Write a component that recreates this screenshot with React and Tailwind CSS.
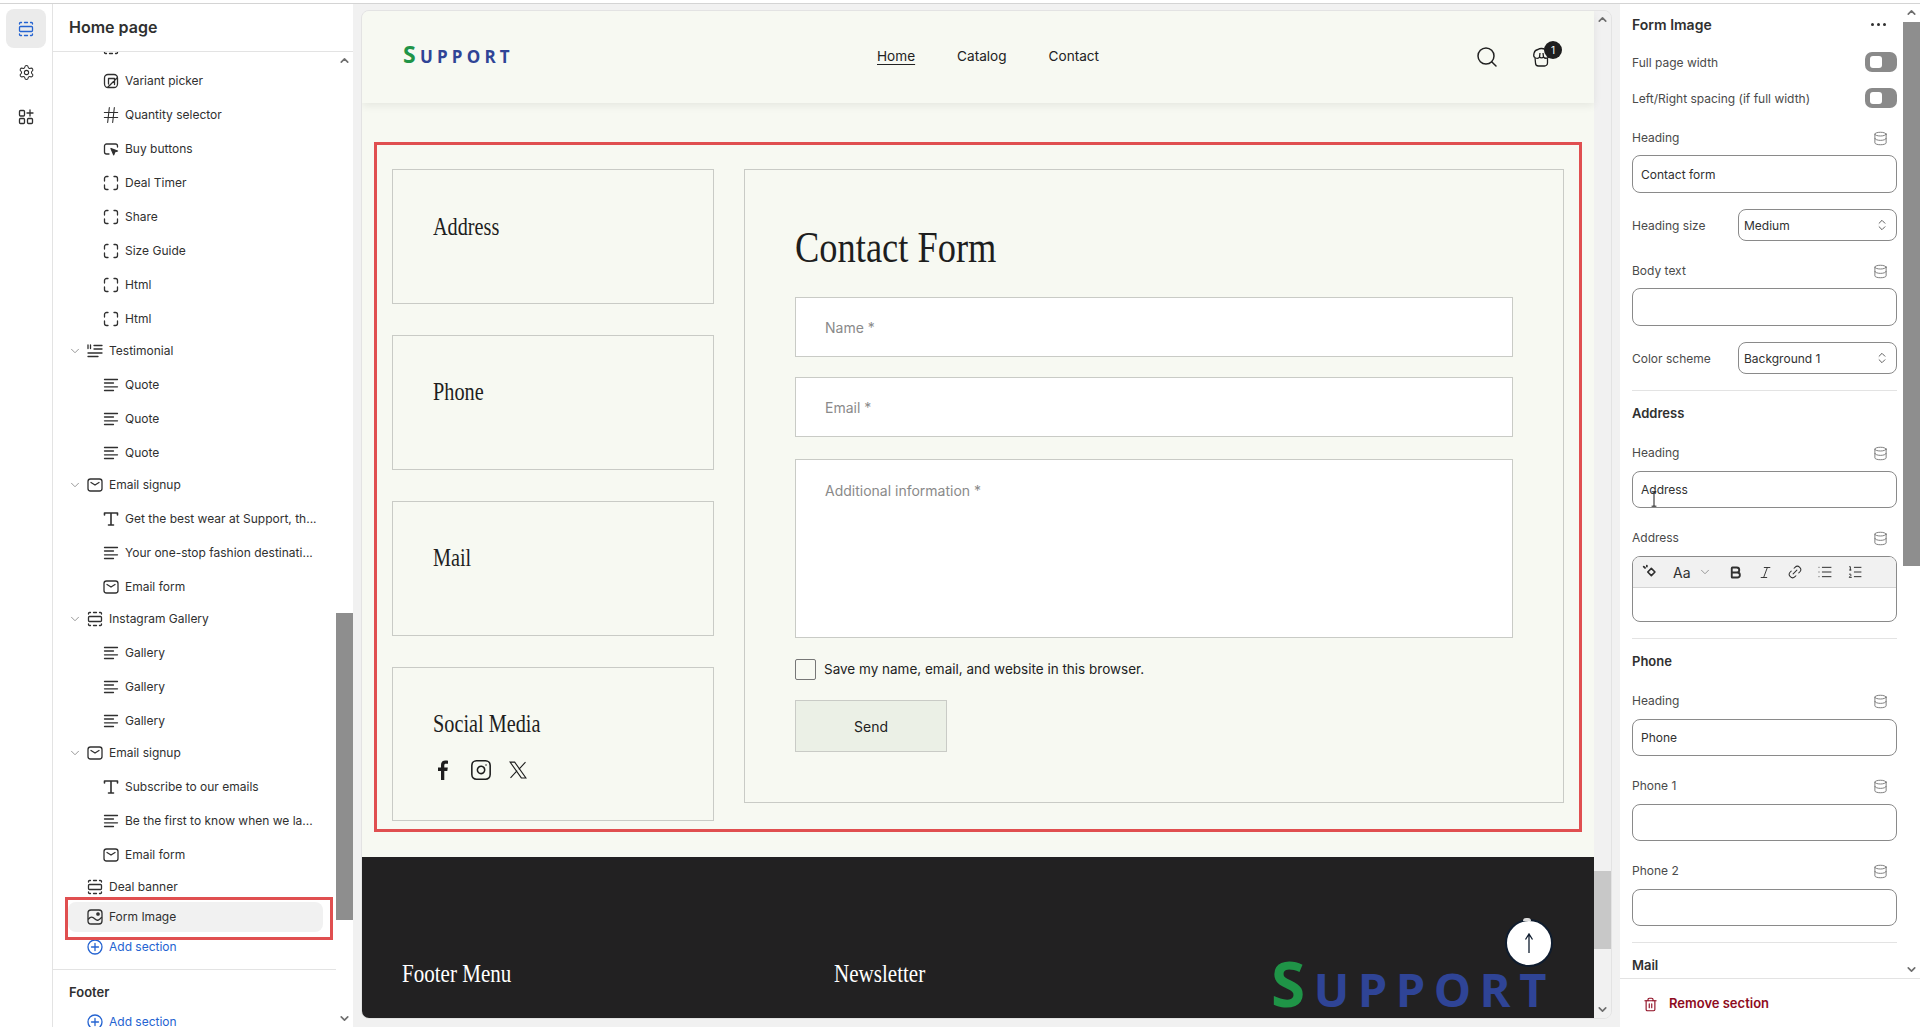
import React from "react";
import { ChevronUp, ChevronDown, ChevronsUpDown, Hash, Settings, Search, Trash2, Bold, Italic, Link2, List, ListOrdered, Database, Instagram } from "lucide-react";

const S = ({ children, className = "w-5 h-5" }) => (
  <svg viewBox="0 0 20 20" fill="none" stroke="currentColor" strokeWidth="1.300" strokeLinecap="round" strokeLinejoin="round" className={className}>{children}</svg>
);
const Block = () => <S><path d="M7 3.500H5.500a2 2 0 0 0-2 2V8M13 3.500h1.500a2 2 0 0 1 2 2V8M7 16.500H5.500a2 2 0 0 1-2-2V12M13 16.500h1.500a2 2 0 0 0 2-2V12" /></S>;
const Lines = () => <S><path d="M3.500 4.500h13M3.500 8h9M3.500 11.800h13M3.500 15.500h9" /></S>;
const TextT = () => <S><path d="M3.500 6V4h13v2M10 4v12M7.500 16h5" strokeWidth="1.600" /></S>;
const Mail = () => <S><rect x="3" y="4" width="14" height="12" rx="2.500" /><path d="M6 7.500l4 2.500 4-2.500" /></S>;
const Sec = () => <S><rect x="3.500" y="7.500" width="13" height="5" rx="1" /><path d="M3.500 5V4.500a1 1 0 0 1 1-1h1M8.500 3.500h3M14.500 3.500h1a1 1 0 0 1 1 1V5M3.500 15v.5a1 1 0 0 0 1 1h1M8.500 16.500h3M14.500 16.500h1a1 1 0 0 0 1-1V15" /></S>;
const Variant = () => <S><rect x="3.500" y="3.500" width="13" height="13" rx="3.500" /><path d="M7 16l9-9M7.500 7.500h6v6M7.500 7.500V13" /></S>;
const Buy = () => <S><path d="M8 15H5.500a2 2 0 0 1-2-2V7a2 2 0 0 1 2-2h9a2 2 0 0 1 2 2v1" /><path d="M10 9.500l6.500 2.500-2.800 1-1 2.800z" fill="currentColor" /></S>;
const Testi = () => <S><path d="M3 4v3.500M5.500 4v3.500M9 4.500h8M9 8h8M3 12h14M3 15.500h10" /></S>;
const FormImg = () => <S><rect x="3" y="3" width="14" height="14" rx="3" /><path d="M3.500 12c2-2.500 4-2.500 6.500 0s4 1 6.500-1.500" /><circle cx="13" cy="7" r="1.200" fill="currentColor" /></S>;
const PlusC = () => <S><circle cx="10" cy="10" r="7" /><path d="M10 6.500v7M6.500 10h7" /></S>;
const HashI = () => <Hash className="w-5 h-5" strokeWidth={1.300} />;

const kids = (arr) => arr.map(([label, Icon]) => ({ label, Icon, child: true }));
const rows = [
  ...kids([["", Sec], ["Variant picker", Variant], ["Quantity selector", HashI], ["Buy buttons", Buy], ["Deal Timer", Block], ["Share", Block], ["Size Guide", Block], ["Html", Block], ["Html", Block]]),
  { label: "Testimonial", Icon: Testi },
  ...kids([["Quote", Lines], ["Quote", Lines], ["Quote", Lines]]),
  { label: "Email signup", Icon: Mail },
  ...kids([["Get the best wear at Support, th...", TextT], ["Your one-stop fashion destinati...", Lines], ["Email form", Mail]]),
  { label: "Instagram Gallery", Icon: Sec },
  ...kids([["Gallery", Lines], ["Gallery", Lines], ["Gallery", Lines]]),
  { label: "Email signup", Icon: Mail },
  ...kids([["Subscribe to our emails", TextT], ["Be the first to know when we la...", Lines], ["Email form", Mail]]),
];

const Row = (r) => (
  r.child ? (
    <div className="h-[34px] flex items-center pl-[48px] gap-[4px] text-[#303030]">
      <span className="w-5 h-5 shrink-0"><r.Icon /></span>
      <span className="whitespace-nowrap">{r.label}</span>
    </div>
  ) : (
    <div className="h-[30px] mb-[2px] flex items-center text-[#303030]">
      <ChevronDown className="w-[14px] h-[14px] ml-[15px] mr-[3px] text-[#8a8a8a]" strokeWidth={1.500} />
      <span className="w-5 h-5 shrink-0"><r.Icon /></span>
      <span className="ml-[4px] whitespace-nowrap">{r.label}</span>
    </div>
  )
);
const AddSection = () => (
  <div className="h-[30px] flex items-center pl-[32px] gap-[4px] text-[#2463d1]"><PlusC /><span>Add section</span></div>
);

function Sidebar() {
  return (
    <div className="w-[353px] shrink-0 bg-white flex h-full">
      <div className="w-[53px] shrink-0 border-r border-[#e3e3e3] flex flex-col items-center pt-[5px]">
        <div className="w-[40px] h-[39px] rounded-lg bg-[#ebebeb] flex items-center justify-center text-[#2463d1]"><Sec /></div>
        <Settings className="w-[17px] h-[17px] mt-[16px] text-[#303030]" strokeWidth={1.500} />
        <S className="w-5 h-5 mt-[26px] text-[#303030]"><rect x="3.500" y="3.500" width="5" height="5.500" rx="1" /><rect x="3.500" y="11.500" width="5" height="5" rx="1" /><rect x="11.500" y="11.500" width="5" height="5" rx="1" /><path d="M14 3v6M11 6h6" /></S>
      </div>
      <div className="flex-1 flex flex-col min-w-0">
        <div className="h-[48px] border-b border-[#e3e3e3] pl-[16px] pb-[1px] flex items-center text-[16px] font-semibold text-[#303030] shrink-0">Home page</div>
        <div className="flex-1 flex min-h-0">
          <div className="flex-1 overflow-hidden text-[12px] min-w-0">
            <div className="-mt-[22px] w-[283px]">
              {rows.map((r, i) => <Row key={i} {...r} />)}
              <div className="h-[30px] flex items-center pl-[32px] gap-[4px] text-[#303030]"><span className="w-5 h-5"><Sec /></span><span>Deal banner</span></div>
              <div className="relative h-[30px] ml-[15px] mr-[13px] pl-[17px] flex items-center gap-[4px] bg-[#f1f1f1] rounded-lg text-[#303030]">
                <span className="w-5 h-5"><FormImg /></span><span>Form Image</span>
                <div className="absolute left-[-3px] right-[-10px] top-[-5px] bottom-[-8px] border-[3px] border-[#e04f50]" />
              </div>
              <AddSection />
              <div className="mt-[7px] border-t border-[#e3e3e3] h-[16px]" />
              <div className="h-[16px] pl-[16px] flex items-center text-[13px] font-semibold text-[#303030]">Footer</div>
              <div className="mt-[6px]"><AddSection /></div>
            </div>
          </div>
          <Scroll thumbTop={546} thumbH={307} color="bg-[#8e8e8e]" />
        </div>
      </div>
    </div>
  );
}

function Scroll({ thumbTop, thumbH, color, track = "bg-white" }) {
  return (
    <div className={`w-[17px] shrink-0 flex flex-col items-center ${track}`}>
      <ChevronUp className="w-[13px] h-[13px] mt-[2px] text-[#6e6e6e] shrink-0" strokeWidth={3} />
      <div className={`w-full shrink-0 ${color}`} style={{ marginTop: thumbTop, height: thumbH }} />
      <ChevronDown className="w-[13px] h-[13px] mt-auto mb-[2px] text-[#6e6e6e] shrink-0" strokeWidth={3} />
    </div>
  );
}

const serif = "font-['Liberation_Serif',serif] origin-left scale-x-[0.81] whitespace-nowrap";

function Card({ title, h, children }) {
  return (
    <div className={`border border-[#c9cbc6] pl-[40px] ${h}`}>
      <div className={`${serif} text-[25px] leading-[30px] text-[#1e1e1e]`}>{title}</div>
      {children}
    </div>
  );
}

function Logo({ big }) {
  return (
    <div className={`font-['Open_Sans',sans-serif] font-bold text-[#2f4496] whitespace-nowrap leading-none ${big ? "text-[47px] tracking-[8.500px]" : "text-[17px] tracking-[4.200px] -mt-[5px]"}`}>
      <span className={`text-[#1f9447] ${big ? "text-[62px]" : "text-[23px]"}`}>S</span>UPPORT
    </div>
  );
}

function Preview() {
  return (
    <div className="w-[1251px] shrink-0 mt-[6px] mb-[8px] ml-[8px] mr-[8px] rounded-lg border border-[#e3e3e3] flex overflow-hidden bg-[#f1f1f1]">
      <div className="flex-1 min-w-0 flex flex-col bg-[#f7f9f2] text-[#222] relative">
        <div className="h-[92px] shrink-0 flex items-center relative shadow-[0_3px_8px_rgba(0,0,0,0.07)]">
          <div className="w-[515px] pl-[41px]"><Logo /></div>
          <nav className="flex gap-[42px] text-[13.600px] pb-[2px]">
            <span className="underline underline-offset-[3px]">Home</span>
            <span>Catalog</span>
            <span>Contact</span>
          </nav>
          <Search className="w-[24px] h-[24px] ml-[376px]" strokeWidth={1.500} />
          <div className="relative ml-[33px] w-[20px] h-[20px]">
            <svg viewBox="0 0 20 20" fill="none" stroke="#1e1e1e" strokeWidth="1.300" className="w-[20px] h-[20px]">
              <path d="M3 10.500C.8 9.500 1.500 3 6 2.500c1.500-1.200 5-1.500 7 0 4.500.5 5.500 7 2.500 8.500v5a3 3 0 0 1-3 3h-6a3 3 0 0 1-3-3z" />
              <path d="M3.500 11c2 .8 3.500 0 4-1 1 1.200 3 1.200 4 0 .8 1 2.500 1.500 4 1M7.500 10l.5-4M11.500 10l-.5-4" />
            </svg>
            <span className="absolute top-[-6px] left-[12px] w-[18px] h-[18px] rounded-full bg-[#1e1e1e] text-white text-[10px] flex items-center justify-center">1</span>
          </div>
        </div>

        <div className="mt-[39px] mx-[12px] border-[3px] border-[#e04f50] h-[690px] pt-[24px] px-[15px] flex gap-[30px]">
          <div className="w-[322px] shrink-0 flex flex-col gap-[31px]">
            <Card h="h-[135px] pt-[42px]" title="Address" />
            <Card h="h-[135px] pt-[41px]" title="Phone" />
            <Card h="h-[135px] pt-[41px]" title="Mail" />
            <Card h="h-[154px] pt-[41px]" title="Social Media">
              <div className="flex items-center mt-[20px] text-[#1e1e1e]">
                <svg viewBox="0 0 12 20" className="w-[12px] h-[20px] ml-[4px]" fill="currentColor"><path d="M4 20v-9H1V7.500h3V5c0-3 1.800-4.500 4.300-4.500 1.200 0 2.200.1 2.700.2v3H9c-1.400 0-1.700.7-1.700 1.600v2.200h3.500l-.5 3.500h-3v9z" /></svg>
                <Instagram className="w-[22px] h-[22px] ml-[21px]" strokeWidth={1.700} />
                <svg viewBox="0 0 24 24" className="w-[20px] h-[20px] ml-[16px]" fill="none" stroke="currentColor" strokeWidth="1.300"><path d="M2.500 2.500h5.500l13.500 19h-5.500zM21 2.500l-8 8.800M3 21.500l8-8.800" /></svg>
              </div>
            </Card>
          </div>
          <div className="flex-1 h-[634px] border border-[#c9cbc6] px-[50px] pt-[54px]">
            <div className={`${serif} text-[45px] leading-[46px] text-[#1e1e1e] h-[73px]`}>Contact Form</div>
            <div className="h-[60px] bg-white border border-[#c9cbc6] pl-[29px] flex items-center text-[14px] text-[#8a8a8a]">Name *</div>
            <div className="mt-[20px] h-[60px] bg-white border border-[#c9cbc6] pl-[29px] flex items-center text-[14px] text-[#8a8a8a]">Email *</div>
            <div className="mt-[22px] h-[179px] bg-white border border-[#c9cbc6] pl-[29px] pt-[20px] text-[14px] text-[#8a8a8a]">Additional information *</div>
            <div className="mt-[21px] flex items-center gap-[8px] h-[21px] text-[13.500px] text-[#222]">
              <span className="w-[21px] h-[21px] border border-[#777] rounded-[2px]" />
              <span>Save my name, email, and website in this browser.</span>
            </div>
            <div className="mt-[20px] w-[152px] h-[52px] bg-[#ebf0e6] border border-[#c9cbc6] flex items-center justify-center text-[14px] text-[#222]">Send</div>
          </div>
        </div>

        <div className="mt-[25px] flex-1 bg-[#222122] relative text-white">
          <div className={`${serif} absolute left-[40px] top-[102px] text-[26px] leading-[30px]`}>Footer Menu</div>
          <div className={`${serif} absolute left-[472px] top-[102px] text-[26px] leading-[30px]`}>Newsletter</div>
          <div className="absolute left-[909px] top-[95px]"><Logo big /></div>
          <div className="absolute left-[1143px] top-[62px] w-[48px] h-[48px] rounded-full bg-white border-2 border-[#0f1c2e] flex items-center justify-center text-[#0f1c2e]">
            <svg viewBox="0 0 12 22" className="w-[12px] h-[22px]" fill="none" stroke="currentColor" strokeWidth="1.300"><path d="M6 21V2M2.500 7.500L6 2l3.500 5.500" /></svg>
            <span className="absolute top-[-3px] left-[16px] w-[8px] h-[3px] rounded-t bg-[#dcdcdc]" />
          </div>
        </div>
      </div>
      <Scroll thumbTop={845} thumbH={78} color="bg-[#c8c8c8]" track="bg-[#f1f1f1]" />
    </div>
  );
}

const Db = () => <Database className="w-[15px] h-[15px] text-[#6e6e6e] mr-[9px]" strokeWidth={1.400} />;
const Label = ({ children, mt }) => (
  <div className={`h-[16px] flex items-center justify-between text-[#4a4a4a] ${mt}`}>
    <span>{children}</span><Db />
  </div>
);
const Input = ({ children, mt = "mt-[10px]", h = "h-[37px]" }) => (
  <div className={`${h} ${mt} border border-[#8a8a8a] rounded-lg pl-[8px] pt-[1px] flex items-center text-[#303030]`}>{children}</div>
);
const Toggle = ({ label, mt }) => (
  <div className={`h-[20px] flex items-center justify-between text-[#4a4a4a] ${mt}`}>
    <span className="pt-[2px]">{label}</span>
    <span className="w-[32px] h-[20px] rounded-[7px] bg-[#8a8a8a] flex items-center pl-[5px]"><span className="w-[12px] h-[12px] rounded-[3px] bg-white" /></span>
  </div>
);
const Select = ({ label, value }) => (
  <div className="h-[32px] mt-[16px] flex items-center justify-between text-[#4a4a4a]">
    <span className="pt-[1px]">{label}</span>
    <span className="w-[159px] h-[32px] border border-[#8a8a8a] rounded-lg pl-[5px] pr-[7px] flex items-center justify-between text-[#303030]">
      <span className="pt-[1px]">{value}</span><ChevronsUpDown className="w-[14px] h-[14px] text-[#4a4a4a]" strokeWidth={1.500} />
    </span>
  </div>
);
const Divider = () => <div className="mt-[16px] h-px bg-[#e3e3e3]" />;
const Bold2 = ({ children }) => <div className="h-[16px] mt-[15px] flex items-center font-semibold text-[13px] text-[#303030]">{children}</div>;

function Panel() {
  return (
    <div className="w-[300px] shrink-0 bg-white flex flex-col text-[12px] h-full">
      <div className="h-[974px] flex shrink-0 overflow-hidden">
        <div className="flex-1 min-w-0 pl-[12px] pr-[6px] pt-[10px]">
          <div className="h-[20px] flex items-center justify-between font-semibold text-[14px] text-[#303030]">
            <span>Form Image</span>
            <span className="flex gap-[3px] mr-[11px]"><i className="w-[3px] h-[3px] rounded-full bg-[#303030]" /><i className="w-[3px] h-[3px] rounded-full bg-[#303030]" /><i className="w-[3px] h-[3px] rounded-full bg-[#303030]" /></span>
          </div>
          <Toggle label="Full page width" mt="mt-[18px]" />
          <Toggle label="Left/Right spacing (if full width)" mt="mt-[16px]" />
          <Label mt="mt-[22px]">Heading</Label>
          <Input mt="mt-[9px]" h="h-[38px]">Contact form</Input>
          <Select label="Heading size" value="Medium" />
          <Label mt="mt-[22px]">Body text</Label>
          <Input mt="mt-[9px]" h="h-[38px]" />
          <Select label="Color scheme" value="Background 1" />
          <Divider />
          <Bold2>Address</Bold2>
          <Label mt="mt-[23px]">Heading</Label>
          <div className="relative">
            <Input>Address</Input>
            <svg viewBox="0 0 10 20" className="absolute left-[18px] top-[20px] w-[8px] h-[16px]" fill="none" stroke="#111" strokeWidth="1.200"><path d="M2 1h6M5 1v18M2 19h6" /></svg>
          </div>
          <Label mt="mt-[22px]">Address</Label>
          <div className="mt-[10px] h-[66px] border border-[#8a8a8a] rounded-lg overflow-hidden">
            <div className="h-[31px] bg-[#f1f1f1] border-b border-[#d4d4d4] flex items-center text-[#303030]">
              <S className="w-[18px] h-[18px] ml-[8px]"><path d="M11.500 6l4 4-4 4-4-4z" strokeWidth="1.800" /><path d="M3 4l1.500 1.500M6.500 3v1" strokeWidth="2" /></S>
              <span className="ml-[14px] text-[14px]">Aa</span>
              <ChevronDown className="w-[14px] h-[14px] ml-[7px] text-[#8a8a8a]" strokeWidth={1.500} />
              <Bold className="w-[15px] h-[15px] ml-[16px]" strokeWidth={3} />
              <Italic className="w-[15px] h-[15px] ml-[15px]" strokeWidth={1.500} />
              <Link2 className="w-[16px] h-[16px] ml-[14px] -rotate-45" strokeWidth={1.500} />
              <List className="w-[16px] h-[16px] ml-[14px]" strokeWidth={1.500} />
              <ListOrdered className="w-[16px] h-[16px] ml-[14px]" strokeWidth={1.500} />
            </div>
          </div>
          <Divider />
          <Bold2>Phone</Bold2>
          <Label mt="mt-[23px]">Heading</Label>
          <Input>Phone</Input>
          <Label mt="mt-[22px]">Phone 1</Label>
          <Input />
          <Label mt="mt-[22px]">Phone 2</Label>
          <Input />
          <Divider />
          <Bold2>Mail</Bold2>
        </div>
        <Scroll thumbTop={3} thumbH={544} color="bg-[#8e8e8e]" />
      </div>
      <div className="flex-1 border-t border-[#e3e3e3] flex items-center pl-[23px] pt-[2px] gap-[11px] font-semibold text-[13px] text-[#8e0b21]">
        <Trash2 className="w-[15px] h-[15px]" strokeWidth={1.800} />
        <span>Remove section</span>
      </div>
    </div>
  );
}

export default function App() {
  return (
    <div className="w-[1920px] h-[1027px] overflow-hidden flex flex-col bg-[#f1f1f1] font-[Inter,sans-serif]">
      <div className="h-[4px] shrink-0 bg-white border-b border-[#d4d4d4]" />
      <div className="flex h-[1023px]">
        <Sidebar />
        <Preview />
        <Panel />
      </div>
    </div>
  );
}
